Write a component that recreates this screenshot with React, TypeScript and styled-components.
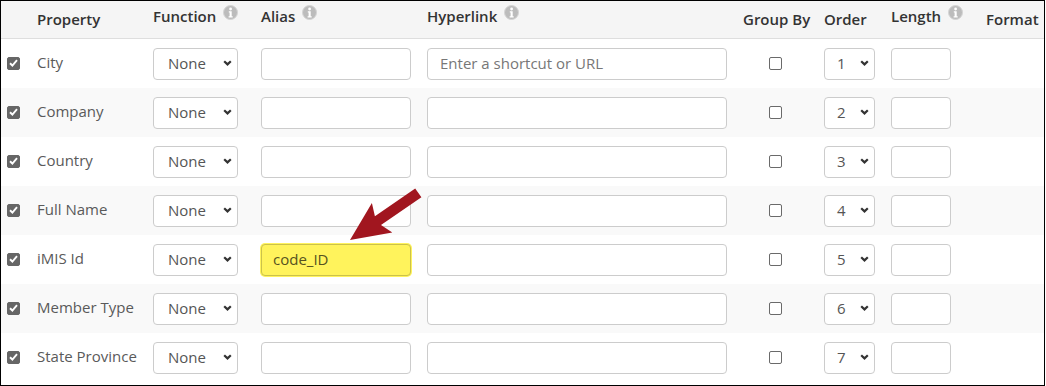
import * as React from 'react'
import styled, { createGlobalStyle } from 'styled-components'

const GlobalStyle = createGlobalStyle`
  body {
    margin: 0;
    background: #fff;
    font-family: 'Open Sans', 'Liberation Sans', sans-serif;
  }
`

const columns = '36px 116px 108px 166px 316px 81px 67px 95px 1fr'

const Frame = styled.div`
  position: relative;
  box-sizing: border-box;
  width: 1045px;
  height: 386px;
  border: 1px solid #000;
  background: #fff;
`

const HeaderRow = styled.div`
  display: grid;
  grid-template-columns: ${columns};
  height: 37px;
  background: #f5f5f5;
  border-bottom: 1px solid #dedede;
`

const HeaderCell = styled.div<{ $raised?: boolean }>`
  display: flex;
  align-items: center;
  box-sizing: border-box;
  padding-bottom: ${p => (p.$raised ? '6px' : '1px')};
  font-size: 15px;
  font-weight: 600;
  color: #333;
  white-space: nowrap;
`

const HeaderLabel = styled.span`
  display: flex;
  align-items: flex-start;
  gap: 7px;
  line-height: 19px;
`

const InfoWrap = styled.span`
  display: block;
  width: 15px;
  height: 15px;
  margin-top: -2px;
`

const Row = styled.div<{ $striped: boolean }>`
  display: grid;
  grid-template-columns: ${columns};
  height: 49px;
  align-items: center;
  background: ${p => (p.$striped ? '#f9f9f9' : '#fff')};
`

const Cell = styled.div<{ $indent?: number }>`
  display: flex;
  align-items: center;
  padding-left: ${p => p.$indent || 0}px;
`

const Name = styled.span`
  margin-bottom: 3px;
  font-size: 15px;
  color: #5a5a5a;
  white-space: nowrap;
`

const Check = styled.span<{ $checked: boolean }>`
  display: flex;
  align-items: center;
  justify-content: center;
  box-sizing: border-box;
  width: 13px;
  height: 13px;
  margin-bottom: 1px;
  border-radius: 2px;
  border: 1px solid ${p => (p.$checked ? '#666' : '#6a6a6a')};
  background: ${p => (p.$checked ? '#666' : '#fff')};
`

const SelectBox = styled.div<{ $width: number; $pad: number }>`
  display: flex;
  align-items: center;
  justify-content: space-between;
  box-sizing: border-box;
  width: ${p => p.$width}px;
  height: 32px;
  padding: 0 5px 2px ${p => p.$pad}px;
  border: 1px solid #ccc;
  border-radius: 4px;
  background: #fff;
  font-size: 15px;
  color: #555;
`

const TextBox = styled.div<{ $width: number; $highlight?: boolean }>`
  display: flex;
  align-items: center;
  box-sizing: border-box;
  width: ${p => p.$width}px;
  height: 32px;
  padding: 0 11px 2px;
  border: 1px solid ${p => (p.$highlight ? '#cbc24b' : '#ccc')};
  border-radius: 4px;
  background: ${p => (p.$highlight ? '#fff35c' : '#fff')};
  box-shadow: ${p => (p.$highlight ? '0 0 0 1px #fff35c' : 'none')};
  font-size: 15px;
  color: ${p => (p.$highlight ? '#56521f' : '#555')};
  white-space: nowrap;
`

const Placeholder = styled.span`
  padding-left: 1px;
  color: #777;
`

const ArrowLayer = styled.svg`
  position: absolute;
  left: 329px;
  top: 179px;
  width: 100px;
  height: 70px;
  pointer-events: none;
`

const InfoIcon = () => (
  <InfoWrap>
    <svg width="15" height="15" viewBox="0 0 15 15">
      <circle cx="7.5" cy="7.5" r="7" fill="#bcbcbc" stroke="#d4d4d4" strokeWidth="1" />
      <circle cx="7.6" cy="4" r="1.4" fill="#fff" />
      <path d="M5.8 6.2h2.9v5.1h1v1.2H5.6v-1.2h1v-3.9h-.8z" fill="#fff" />
    </svg>
  </InfoWrap>
)

const Chevron = () => (
  <svg width="9" height="6" viewBox="0 0 9 6">
    <polyline points="1.2,1.2 4.5,4.4 7.8,1.2" fill="none" stroke="#333" strokeWidth="2.2" />
  </svg>
)

const CheckMark = () => (
  <svg width="9" height="8" viewBox="0 0 9 8">
    <polyline points="1,4.2 3.4,6.5 8,1.2" fill="none" stroke="#fff" strokeWidth="1.9" />
  </svg>
)

const properties = ['City', 'Company', 'Country', 'Full Name', 'iMIS Id', 'Member Type', 'State Province']

const headers: { label: string; info?: boolean }[] = [
  { label: '' },
  { label: 'Property' },
  { label: 'Function', info: true },
  { label: 'Alias', info: true },
  { label: 'Hyperlink', info: true },
  { label: 'Group By' },
  { label: 'Order' },
  { label: 'Length', info: true },
  { label: 'Format' },
]

const App = () => {
  return (
    <>
      <GlobalStyle />
      <Frame>
        <HeaderRow>
          {headers.map(h => (
            <HeaderCell key={h.label || 'sel'} $raised={h.info}>
              <HeaderLabel>
                {h.label}
                {h.info && <InfoIcon />}
              </HeaderLabel>
            </HeaderCell>
          ))}
        </HeaderRow>

        {properties.map((name, i) => (
          <Row key={name} $striped={i % 2 === 1}>
            <Cell $indent={6}>
              <Check $checked>
                <CheckMark />
              </Check>
            </Cell>
            <Cell>
              <Name>{name}</Name>
            </Cell>
            <Cell>
              <SelectBox $width={85} $pad={14}>
                None
                <Chevron />
              </SelectBox>
            </Cell>
            <Cell>
              {name === 'iMIS Id' ? (
                <TextBox $width={150} $highlight>code_ID</TextBox>
              ) : (
                <TextBox $width={150} />
              )}
            </Cell>
            <Cell>
              <TextBox $width={300}>
                {i === 0 && <Placeholder>Enter a shortcut or URL</Placeholder>}
              </TextBox>
            </Cell>
            <Cell $indent={26}>
              <Check $checked={false} />
            </Cell>
            <Cell>
              <SelectBox $width={51} $pad={12}>
                {i + 1}
                <Chevron />
              </SelectBox>
            </Cell>
            <Cell>
              <TextBox $width={60} />
            </Cell>
            <Cell />
          </Row>
        ))}

        <ArrowLayer viewBox="330 180 100 70">
          <polygon
            points="350,240 371.9,203 374.9,216.2 415.2,188.4 421.4,197.3 381,225.1 392.3,232.6"
            fill="#a1161f"
          />
        </ArrowLayer>
      </Frame>
    </>
  )
}

export default App
